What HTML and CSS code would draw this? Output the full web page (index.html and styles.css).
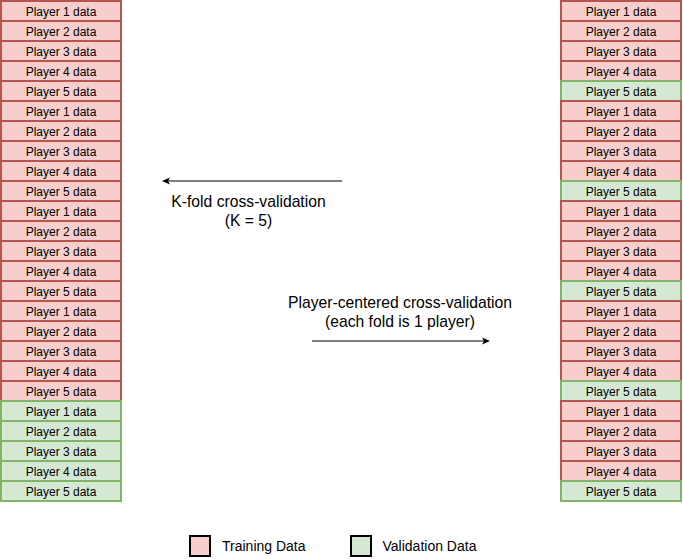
FILE: index.html
```html
<!DOCTYPE html>
<html>
<head>
<meta charset="utf-8">
<link rel="stylesheet" href="styles.css">
</head>
<body>
<div class="diagram">
  <div class="column">
    <div class="cell train">Player 1 data</div>
    <div class="cell train">Player 2 data</div>
    <div class="cell train">Player 3 data</div>
    <div class="cell train">Player 4 data</div>
    <div class="cell train">Player 5 data</div>
    <div class="cell train">Player 1 data</div>
    <div class="cell train">Player 2 data</div>
    <div class="cell train">Player 3 data</div>
    <div class="cell train">Player 4 data</div>
    <div class="cell train">Player 5 data</div>
    <div class="cell train">Player 1 data</div>
    <div class="cell train">Player 2 data</div>
    <div class="cell train">Player 3 data</div>
    <div class="cell train">Player 4 data</div>
    <div class="cell train">Player 5 data</div>
    <div class="cell train">Player 1 data</div>
    <div class="cell train">Player 2 data</div>
    <div class="cell train">Player 3 data</div>
    <div class="cell train">Player 4 data</div>
    <div class="cell train">Player 5 data</div>
    <div class="cell valid">Player 1 data</div>
    <div class="cell valid">Player 2 data</div>
    <div class="cell valid">Player 3 data</div>
    <div class="cell valid">Player 4 data</div>
    <div class="cell valid">Player 5 data</div>
  </div>

  <div class="middle">
    <svg class="arrow arrow-left" width="180" height="10" viewBox="0 0 180 10">
      <line x1="6" y1="5" x2="180" y2="5" stroke="#000" stroke-width="1"/>
      <path d="M0 5 L8 1.5 L6 5 L8 8.5 Z" fill="#000"/>
    </svg>
    <div class="label label-kfold">K-fold cross-validation<br>(K = 5)</div>
    <div class="label label-player">Player-centered cross-validation<br>(each fold is 1 player)</div>
    <svg class="arrow arrow-right" width="178" height="10" viewBox="0 0 178 10">
      <line x1="0" y1="5" x2="172" y2="5" stroke="#000" stroke-width="1"/>
      <path d="M178 5 L170 1.5 L172 5 L170 8.5 Z" fill="#000"/>
    </svg>
  </div>

  <div class="column">
    <div class="cell train">Player 1 data</div>
    <div class="cell train">Player 2 data</div>
    <div class="cell train">Player 3 data</div>
    <div class="cell train">Player 4 data</div>
    <div class="cell valid">Player 5 data</div>
    <div class="cell train">Player 1 data</div>
    <div class="cell train">Player 2 data</div>
    <div class="cell train">Player 3 data</div>
    <div class="cell train">Player 4 data</div>
    <div class="cell valid">Player 5 data</div>
    <div class="cell train">Player 1 data</div>
    <div class="cell train">Player 2 data</div>
    <div class="cell train">Player 3 data</div>
    <div class="cell train">Player 4 data</div>
    <div class="cell valid">Player 5 data</div>
    <div class="cell train">Player 1 data</div>
    <div class="cell train">Player 2 data</div>
    <div class="cell train">Player 3 data</div>
    <div class="cell train">Player 4 data</div>
    <div class="cell valid">Player 5 data</div>
    <div class="cell train">Player 1 data</div>
    <div class="cell train">Player 2 data</div>
    <div class="cell train">Player 3 data</div>
    <div class="cell train">Player 4 data</div>
    <div class="cell valid">Player 5 data</div>
  </div>
</div>

<div class="legend">
  <div class="legend-item">
    <span class="swatch train"></span>
    <span class="legend-text">Training Data</span>
  </div>
  <div class="legend-item">
    <span class="swatch valid"></span>
    <span class="legend-text">Validation Data</span>
  </div>
</div>
</body>
</html>
```
FILE: styles.css
```css
html, body {
  margin: 0;
  padding: 0;
  background: #ffffff;
}

body {
  width: 683px;
  height: 559px;
  overflow: hidden;
  font-family: "Liberation Sans", Arial, Helvetica, sans-serif;
  color: #000;
}

.diagram {
  display: flex;
  align-items: flex-start;
  width: 682px;
}

.column {
  width: 122px;
  display: flex;
  flex-direction: column;
}

.cell {
  box-sizing: border-box;
  height: 22px;
  padding-top: 1px;
  line-height: 18px;
  font-size: 12px;
  text-align: center;
  border: 2px solid;
  white-space: nowrap;
}

.cell + .cell {
  margin-top: -2px;
}

.train {
  background: #f8cecc;
  border-color: #b85450;
}

.valid {
  background: #d5e8d4;
  border-color: #82b366;
}

.middle {
  width: 438px;
  display: flex;
  flex-direction: column;
  align-items: flex-start;
}

.arrow {
  display: block;
}

.arrow-left {
  margin-top: 176px;
  margin-left: 40px;
}

.label {
  font-size: 15.7px;
  line-height: 19px;
  text-align: center;
  white-space: nowrap;
}

.label-kfold {
  width: 181px;
  margin-left: 36px;
  margin-top: 6px;
}

.label-player {
  width: 240px;
  margin-left: 158px;
  margin-top: 63px;
}

.arrow-right {
  margin-top: 5px;
  margin-left: 190px;
}

.legend {
  display: flex;
  margin-top: 33px;
  margin-left: 189px;
}

.legend-item {
  display: flex;
  align-items: center;
  gap: 11px;
}

.legend-item + .legend-item {
  margin-left: 44px;
}

.swatch {
  box-sizing: border-box;
  width: 22px;
  height: 22px;
  border: 2px solid;
  display: block;
}

.legend-text {
  font-size: 14px;
  line-height: 17px;
}
```
